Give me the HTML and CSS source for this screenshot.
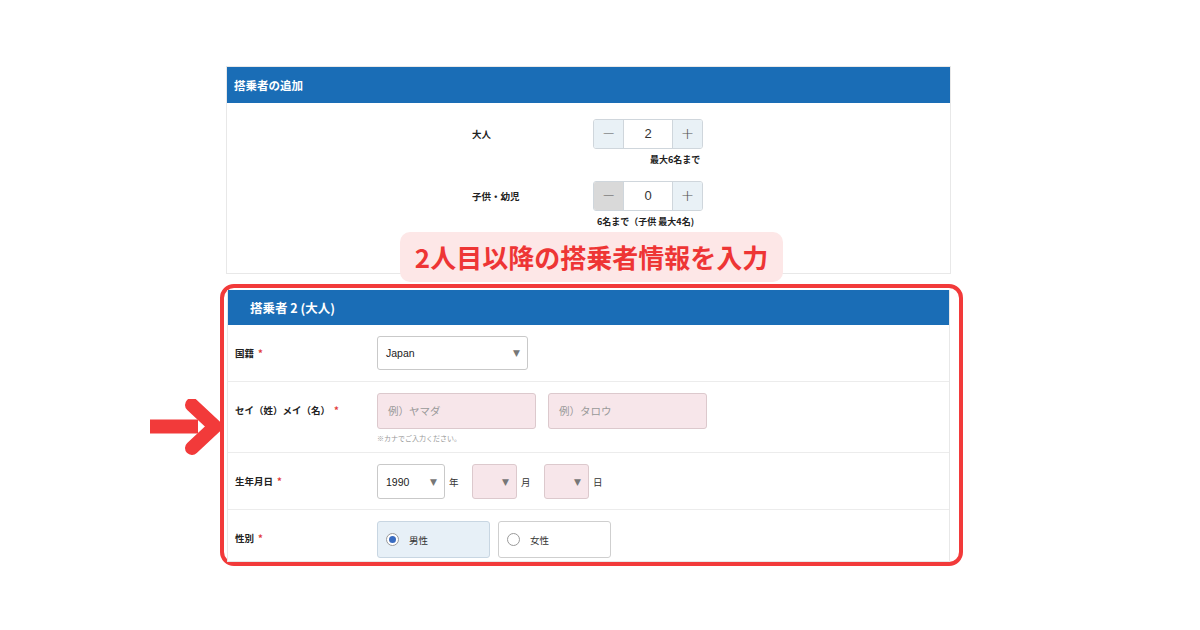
FILE: index.html
```html
<!DOCTYPE html>
<html lang="ja">
<head>
<meta charset="utf-8">
<link rel="stylesheet" href="styles.css">
</head>
<body>
<div class="page">
  <section class="panel top-panel">
    <div class="panel-head">搭乗者の追加</div>
    <div class="counter-body">
      <div class="counter-row">
        <div class="counter-label">大人</div>
        <div class="counter-col">
          <div class="stepper">
            <span class="step-btn">−</span>
            <span class="step-val">2</span>
            <span class="step-btn">+</span>
          </div>
          <div class="counter-hint hint-right">最大6名まで</div>
        </div>
      </div>
      <div class="counter-row">
        <div class="counter-label">子供・幼児</div>
        <div class="counter-col">
          <div class="stepper">
            <span class="step-btn disabled">−</span>
            <span class="step-val">0</span>
            <span class="step-btn">+</span>
          </div>
          <div class="counter-hint hint-center">6名まで（子供 最大4名)</div>
        </div>
      </div>
    </div>
  </section>

  <div class="highlight">
    <section class="panel">
      <div class="panel-head head-indent">搭乗者 2 (大人)</div>
      <div class="form-row">
        <div class="form-label">国籍<span class="req">*</span></div>
        <div class="form-field">
          <div class="select sel-country"><span class="sel-text">Japan</span><span class="caret">▼</span></div>
        </div>
      </div>
      <div class="form-row row-name">
        <div class="form-label">セイ（姓）メイ（名）<span class="req">*</span></div>
        <div class="form-field">
          <div class="name-inputs">
            <div class="text-input">例）ヤマダ</div>
            <div class="text-input">例）タロウ</div>
          </div>
          <div class="field-hint">※カナでご入力ください。</div>
        </div>
      </div>
      <div class="form-row">
        <div class="form-label">生年月日<span class="req">*</span></div>
        <div class="form-field date-field">
          <div class="select sel-year"><span class="sel-text">1990</span><span class="caret">▼</span></div>
          <span class="unit">年</span>
          <div class="select sel-small pink"><span class="sel-text"></span><span class="caret">▼</span></div>
          <span class="unit">月</span>
          <div class="select sel-small pink"><span class="sel-text"></span><span class="caret">▼</span></div>
          <span class="unit">日</span>
        </div>
      </div>
      <div class="form-row last">
        <div class="form-label">性別<span class="req">*</span></div>
        <div class="form-field radio-field">
          <div class="radio-box checked"><span class="radio"></span>男性</div>
          <div class="radio-box"><span class="radio"></span>女性</div>
        </div>
      </div>
    </section>
  </div>

  <div class="badge">2人目以降の搭乗者情報を入力</div>
  <svg class="arrow" width="80" height="56" viewBox="0 0 80 56">
    <path d="M0 20.5 H48 V34.5 H0 Z" fill="#f23a3a"/>
    <path d="M42 6 L65 27.5 L42 49" fill="none" stroke="#f23a3a" stroke-width="14" stroke-linecap="round" stroke-linejoin="round"/>
  </svg>
</div>
</body>
</html>
```

FILE: styles.css
```css
* { box-sizing: border-box; }
html, body { margin: 0; padding: 0; background: #fff; }
body {
  width: 1200px;
  height: 630px;
  overflow: hidden;
  font-family: "Noto Sans CJK JP", "Noto Sans", sans-serif;
  color: #222;
}
.page {
  position: relative;
  width: 1200px;
  height: 630px;
  padding-top: 66px;
}
.panel {
  background: #fff;
  border: 1px solid #e8e8e8;
}
.top-panel {
  margin-left: 226px;
  width: 725px;
  height: 208px;
}
.panel-head {
  background: #1a6db6;
  color: #fff;
  font-weight: 700;
  font-size: 11.5px;
  height: 36px;
  line-height: 36px;
  padding-left: 7px;
}
.head-indent {
  height: 35px;
  line-height: 35px;
  padding-left: 22px;
  font-size: 12.5px;
}
.counter-body {
  padding-top: 16px;
}
.counter-row {
  display: flex;
  padding-left: 245px;
}
.counter-label {
  width: 121px;
  font-size: 9.5px;
  font-weight: 700;
  line-height: 30px;
}
.counter-col {
  width: 130px;
  height: 62px;
}
.stepper {
  display: flex;
  width: 110px;
  height: 30px;
  border: 1px solid #cfd6dc;
  border-radius: 3px;
  overflow: hidden;
}
.step-btn {
  width: 29px;
  background: #e9f1f6;
  color: #555;
  text-align: center;
  line-height: 28px;
  font-size: 16px;
  font-family: "DejaVu Sans", sans-serif;
  font-weight: 300;
}
.step-btn.disabled { background: #d9d9d9; }
.step-val {
  flex: 1;
  text-align: center;
  line-height: 28px;
  font-size: 13px;
  border-left: 1px solid #cfd6dc;
  border-right: 1px solid #cfd6dc;
  font-family: "Liberation Sans", sans-serif;
  color: #333;
}
.counter-hint {
  font-size: 9px;
  font-weight: 700;
  margin-top: 5px;
  line-height: 12px;
  white-space: nowrap;
}
.hint-right { padding-left: 57px; }
.hint-center { padding-left: 4px; }

.highlight {
  margin-left: 220px;
  margin-top: 10px;
  width: 743px;
  height: 282px;
  border: 4px solid #f23a3a;
  border-radius: 14px;
  padding: 2px 9px 0 3px;
}
.highlight .panel {
  border-top: none;
  height: 272px;
}
.form-row {
  display: flex;
  align-items: flex-start;
  border-bottom: 1px solid #ececec;
  padding: 11px 0 10px 0;
}
.form-row.last { border-bottom: none; }
.form-label {
  width: 149px;
  padding-left: 7px;
  font-size: 9.5px;
  font-weight: 700;
  line-height: 35px;
  white-space: nowrap;
}
.req {
  color: #e23b3b;
  margin-left: 4px;
}
.form-field { flex: 1; }
.select {
  display: flex;
  align-items: center;
  justify-content: space-between;
  height: 35px;
  border: 1px solid #c9c9c9;
  border-radius: 3px;
  background: #fff;
  padding: 0 7px 0 8px;
  font-family: "Liberation Sans", sans-serif;
  font-size: 10.5px;
  color: #222;
}
.sel-country { width: 151px; height: 34px; }
.select.pink {
  background: #f7e6ea;
  border-color: #dcc9cd;
}
.caret {
  color: #777;
  font-size: 9px;
  font-family: "DejaVu Sans", sans-serif;
}
.row-name { padding-bottom: 8px; }
.name-inputs { display: flex; gap: 12px; }
.text-input {
  width: 159px;
  height: 36px;
  line-height: 34px;
  background: #f7e6ea;
  border: 1px solid #dcc9cd;
  border-radius: 3px;
  padding-left: 10px;
  font-size: 10.5px;
  color: #999;
}
.field-hint {
  margin-top: 3px;
  font-size: 7px;
  color: #999;
  line-height: 12px;
}
.date-field {
  display: flex;
  align-items: center;
}
.sel-year { width: 68px; }
.sel-small { width: 45px; }
.unit {
  font-size: 9.5px;
  color: #333;
  margin: 0 4px 0 4px;
  width: 19px;
}
.radio-field {
  display: flex;
  gap: 8px;
}
.radio-box {
  display: flex;
  align-items: center;
  width: 113px;
  height: 37px;
  border: 1px solid #cfcfcf;
  border-radius: 3px;
  padding-left: 8px;
  font-size: 9.5px;
  color: #333;
}
.radio-box.checked {
  background: #e7f0f7;
  border-color: #c8d6e2;
}
.radio {
  width: 13px;
  height: 13px;
  border: 1px solid #9a9a9a;
  border-radius: 50%;
  margin-right: 10px;
  background: #fff;
  position: relative;
}
.radio-box.checked .radio::after {
  content: "";
  position: absolute;
  left: 2px;
  top: 2px;
  width: 7px;
  height: 7px;
  border-radius: 50%;
  background: #3a6cc0;
}
.badge {
  position: absolute;
  left: 400px;
  top: 232px;
  width: 383px;
  height: 50px;
  background: #fde7e7;
  border-radius: 10px;
  color: #ee3535;
  font-size: 26px;
  font-weight: 700;
  text-align: center;
  line-height: 50px;
  white-space: nowrap;
}
.arrow {
  position: absolute;
  left: 150px;
  top: 399px;
}
```
